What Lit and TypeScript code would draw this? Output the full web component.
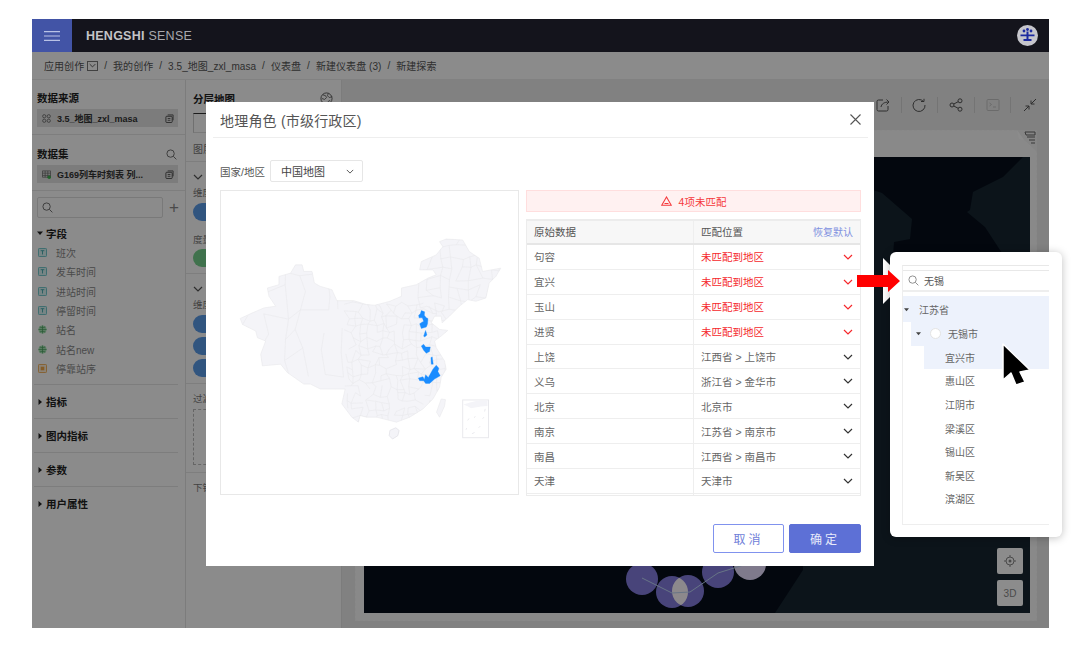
import { LitElement, html, css, svg } from 'lit';
import { customElement } from 'lit/decorators.js';

const OUTLINE =
  '58,232 95,215 130,200 165,195 145,165 140,140 175,130 175,105 210,95 225,70 245,70 250,90 275,90 282,125 300,135 335,145 350,178 400,178 440,190 465,192 510,180 545,165 545,140 590,130 625,110 650,100 640,85 600,85 605,60 650,40 670,15 660,0 680,-8 730,-5 750,30 780,50 790,90 845,80 830,105 810,125 800,170 770,180 745,175 720,195 690,225 668,245 665,225 645,225 635,245 660,265 685,268 665,285 645,300 650,320 675,360 680,385 665,410 660,440 640,475 610,505 570,530 530,545 490,535 470,530 440,530 420,525 415,545 395,530 365,490 375,445 345,445 300,445 270,430 250,430 200,395 180,370 125,375 120,340 135,300 110,290 105,270 65,250';

const BLUE = [
  '597,222 602,218 605,208 615,212 614,222 620,230 625,232 624,248 620,258 605,262 600,248 612,240 608,230 598,230',
  '612,285 618,268 622,282 615,288',
  '605,315 612,310 618,318 632,318 630,332 620,337 612,328',
  '634,350 638,348 641,370 635,370',
  '596,412 610,408 614,416 618,402 626,410 632,400 640,385 650,373 658,382 655,392 662,405 645,415 630,428 618,428 612,420 600,420',
];

// jittered grid, clipped to the outline, stands in for the prefecture borders
function mesh(x0: number, y0: number, x1: number, y1: number, cell: number, seed: number) {
  let s = seed;
  const rnd = () => {
    s = (s * 16807) % 2147483647;
    return s / 2147483647;
  };
  const pts: number[][][] = [];
  for (let j = 0; y0 + j * cell <= y1; j++) {
    const row: number[][] = [];
    for (let i = 0; x0 + i * cell <= x1; i++) {
      row.push([
        x0 + i * cell + (rnd() - 0.5) * cell * 0.8,
        y0 + j * cell + (rnd() - 0.5) * cell * 0.8,
      ]);
    }
    pts.push(row);
  }
  let d = '';
  pts.forEach((row, j) =>
    row.forEach((p, i) => {
      const r = row[i + 1];
      const b = pts[j + 1]?.[i];
      if (r && rnd() > 0.25) d += `M${p[0].toFixed(0)} ${p[1].toFixed(0)}L${r[0].toFixed(0)} ${r[1].toFixed(0)}`;
      if (b && rnd() > 0.25) d += `M${p[0].toFixed(0)} ${p[1].toFixed(0)}L${b[0].toFixed(0)} ${b[1].toFixed(0)}`;
    })
  );
  return d;
}

const MESH = [
  mesh(60, 90, 390, 450, 62, 7),
  mesh(380, 190, 690, 550, 21, 11),
  mesh(600, -10, 850, 200, 30, 23),
].join('');

const chevron = () => html`<svg class="chev" viewBox="0 0 10 6"><path d="M1 1l4 4 4-4" fill="none" stroke="currentColor" stroke-width="1.200"/></svg>`;
const caret = (open = false) => html`<svg class="caret" viewBox="0 0 6 6"><path d="${open ? 'M0 1.5h6L3 5z' : 'M1.5 0v6L5 3z'}" fill="currentColor"/></svg>`;
const copyIcon = html`<svg class="copy" viewBox="0 0 10 10"><rect x="1" y="2.5" width="7" height="7" rx="1" fill="none" stroke="currentColor"/><path d="M3 1h6v6M3 5h3M3 7h3" fill="none" stroke="currentColor" stroke-width=".9"/></svg>`;
const searchIcon = html`<svg class="search" viewBox="0 0 12 12"><circle cx="5" cy="5" r="4" fill="none" stroke="currentColor"/><path d="M8 8l3.3 3.3" stroke="currentColor"/></svg>`;

const FIELDS = [
  ['T', '班次'],
  ['T', '发车时间'],
  ['T', '进站时间'],
  ['T', '停留时间'],
  ['G', '站名'],
  ['G', '站名new'],
  ['N', '停靠站序'],
];

const ROWS = [
  ['句容', ''],
  ['宜兴', ''],
  ['玉山', ''],
  ['进贤', ''],
  ['上饶', '江西省 > 上饶市'],
  ['义乌', '浙江省 > 金华市'],
  ['北京', '北京市'],
  ['南京', '江苏省 > 南京市'],
  ['南昌', '江西省 > 南昌市'],
  ['天津', '天津市'],
];

@customElement('app-root')
export class AppRoot extends LitElement {
  static styles = css`
    :host {
      display: block;
      width: 1080px;
      height: 647px;
      position: relative;
      overflow: hidden;
      background: #fff;
      font-family: 'Liberation Sans', 'Noto Sans CJK SC', sans-serif;
      font-size: 10px;
      color: #333;
    }
    svg { display: block; flex: none; }

    .window {
      position: absolute;
      left: 32px;
      top: 19px;
      width: 1017px;
      height: 609px;
      display: flex;
      flex-direction: column;
      background: #fdfdfd;
    }
    .topbar {
      position: relative;
      z-index: 3;
      height: 33px;
      flex: none;
      display: flex;
      align-items: center;
      background: #14141c;
    }
    .burger {
      width: 40px;
      height: 33px;
      background: #4254a6;
      display: flex;
      align-items: center;
      justify-content: center;
    }
    .burger svg { width: 16px; height: 10px; }
    .logo { margin-left: 14px; font-size: 12.5px; color: #a8a8ae; letter-spacing: .25px; }
    .logo b { color: #c4c4c8; }
    .avatar { margin-left: auto; margin-right: 11px; width: 21px; height: 21px; }

    .crumbs {
      height: 28px;
      flex: none;
      box-sizing: border-box;
      border-bottom: 1px solid #ececec;
      padding-left: 12px;
      display: flex;
      align-items: center;
      gap: 6px;
      font-size: 10px;
      letter-spacing: .05px;
      color: #555;
    }
    .crumbs .drop {
      width: 11px;
      height: 10px;
      margin-left: -3px;
      box-sizing: border-box;
      border: 1px solid #777;
      display: flex;
      align-items: center;
      justify-content: center;
      color: #444;
    }
    .crumbs .drop svg { width: 7px; height: 5px; }

    .main { flex: 1; display: flex; min-height: 0; }

    .left {
      width: 154px;
      flex: none;
      box-sizing: border-box;
      border-right: 1px solid #e2e2e2;
      background: #fefefe;
    }
    .src { height: 55px; box-sizing: border-box; padding: 11px 7px 0 5px; border-bottom: 1px solid #e6e6e6; margin-bottom: 1px; }
    .src-head { height: 14px; line-height: 14px; display: flex; justify-content: space-between; align-items: center; font-weight: 700; font-size: 10.5px; color: #222; }
    .src-head .search { width: 11px; height: 11px; color: #666; margin-right: 1px; }
    .chip {
      margin-top: 4px;
      height: 18px;
      background: #e2e2e2;
      display: flex;
      align-items: center;
      padding: 0 4px 0 5px;
      gap: 6px;
      font-size: 9px;
      font-weight: 700;
      color: #333;
      white-space: nowrap;
    }
    .chip .copy { width: 9px; height: 9px; margin-left: auto; color: #444; }
    .chip .ic { width: 9px; height: 9px; color: #666; }
    .finder { margin: 6px 0 0 5px; display: flex; align-items: center; }
    .finder .box { width: 126px; height: 21px; box-sizing: border-box; border: 1px solid #dcdcdc; border-radius: 2px; display: flex; align-items: center; padding-left: 4px; color: #666; }
    .finder .box svg { width: 11px; height: 11px; }
    .finder .plus { margin-left: 6px; font-size: 17px; line-height: 16px; color: #888; }
    .group-head { height: 20px; margin: 5px 0 0 5px; display: flex; align-items: center; gap: 3px; font-size: 10.5px; font-weight: 700; color: #222; }
    .caret { width: 6px; height: 6px; color: #222; }
    .field { height: 19.3px; display: flex; align-items: center; padding-left: 6px; gap: 9px; color: #888; font-size: 10px; }
    .field svg { width: 9px; height: 9px; }
    .groups { margin: 6px 7px 0 2px; }
    .groups > div { height: 34px; box-sizing: border-box; border-top: 1px solid #e4e4e4; display: flex; align-items: center; gap: 3px; padding-left: 3px; font-size: 10.5px; font-weight: 700; color: #222; }

    .mid { width: 156px; flex: none; box-sizing: border-box; border-right: 1px solid #e2e2e2; }
    .mid-top { height: 82px; box-sizing: border-box; border-bottom: 1px solid #e6e6e6; padding: 11px 8px 0 7px; color: #777; }
    .mid-head { height: 14px; display: flex; justify-content: space-between; align-items: center; font-weight: 700; font-size: 10.5px; color: #222; }
    .mid-head svg { width: 13px; height: 13px; color: #555; }
    .tab { height: 20px; margin-top: 8px; width: 60px; box-sizing: border-box; border-top: 1px solid #333; border-left: 1px solid #ccc; border-bottom: 1px solid #ddd; }
    .mid-label { margin-top: 8px; }
    .sec { box-sizing: border-box; border-bottom: 1px solid #e6e6e6; padding: 8px 0 0 7px; color: #777; }
    .sec-a { height: 112px; }
    .sec-b { height: 110px; }
    .sec-c { height: 89px; padding-top: 6px; }
    .sec-d { border: 0; padding-top: 6px; }
    .sec .chev { width: 10px; height: 14px; color: #555; }
    .label { height: 14px; line-height: 14px; margin-top: 2px; font-size: 9.5px; }
    .pill { width: 60px; height: 18px; margin-top: 3px; border-radius: 9px; background: #5a9be8; }
    .pill.green { background: #76cf8c; margin-top: 2px; }
    .pill.tight { margin-top: 4px; }
    .gap-12 { margin-top: 12px; }
    .dashed { width: 80px; height: 56px; margin-top: 3px; box-sizing: border-box; border: 1px dashed #bbb; }

    .canvas { flex: 1; min-width: 0; background: #ebebeb; }
    .tools { height: 50px; display: flex; justify-content: flex-end; align-items: center; padding-right: 1px; color: #555; }
    .tools .t { width: 36.6px; height: 16px; display: flex; justify-content: center; align-items: center; border-right: 1px solid #d4d4d4; box-sizing: border-box; }
    .tools .t:last-child { border-right: 0; }
    .tools svg { width: 14px; height: 14px; }
    .card { margin: 0 12px 0 13px; height: 491px; box-sizing: border-box; padding: 26px 6px 7px 8px; border: 1px dashed #f6f6f6; position: relative; background: #fafafa; }
    .ear { position: absolute; right: -1px; top: -1px; width: 22px; height: 22px; color: #666; }
    .geo { position: relative; height: 100%; background: #070e1b; overflow: hidden; }
    .geo > svg { width: 100%; height: 100%; }
    .mapbtn { position: absolute; right: 7px; width: 26px; height: 26px; border-radius: 2px; background: #fff; color: #888; display: flex; align-items: center; justify-content: center; font-size: 10px; }
    .mapbtn svg { width: 12px; height: 12px; }
    .b1 { bottom: 39px; }
    .b2 { bottom: 7px; }

    .shade { position: absolute; left: 0; right: 0; top: 33px; bottom: 0; z-index: 1; background: rgba(0, 0, 0, .45); }

    .modal {
      position: absolute;
      z-index: 2;
      left: 174px;
      top: 83px;
      width: 668px;
      height: 464px;
      box-sizing: border-box;
      background: #fff;
      padding: 0 13px 0 14px;
      display: flex;
      flex-direction: column;
    }
    .m-head { height: 35px; flex: none; margin: 0 -7px; padding: 0 7px; border-bottom: 1px solid #eee; display: flex; align-items: center; justify-content: space-between; font-size: 14px; letter-spacing: .2px; color: #555; }
    .m-head svg { width: 11px; height: 11px; color: #555; }
    .country { margin-top: 22px; height: 22px; flex: none; display: flex; align-items: center; gap: 5px; font-size: 10.5px; color: #555; }
    .select { width: 93px; height: 22px; box-sizing: border-box; border: 1px solid #e6e6e6; border-radius: 2px; padding: 0 8px 0 10px; display: flex; align-items: center; justify-content: space-between; font-size: 11px; color: #444; }
    .select svg { width: 8px; height: 5px; color: #555; }
    .split { margin-top: 8px; display: grid; grid-template-columns: 299px 335px; gap: 7px; }
    .map { height: 305px; box-sizing: border-box; border: 1px solid #e8e8e8; }
    .map svg { width: 100%; height: 100%; }
    .alert { height: 22px; box-sizing: border-box; background: #fff1f1; border: 1px solid #ffdede; color: #f5393c; display: flex; align-items: center; justify-content: center; gap: 7px; font-size: 10.5px; }
    .alert svg { width: 11px; height: 10px; }
    .table { margin-top: 7px; height: 277px; box-sizing: border-box; overflow: hidden; border: 1px solid #ececec; border-top-width: 2px; font-size: 10.5px; color: #666; }
    .tr { display: grid; grid-template-columns: 167px 1fr; height: 24.9px; box-sizing: border-box; border-bottom: 1.5px solid #eee; }
    .tr > div { display: flex; align-items: center; padding: 0 7px; }
    .tr > div:first-child { border-right: 1.5px solid #eee; }
    .tr.th { height: 24px; background: #f7f7f7; color: #555; border-bottom: 2px solid #e6e6e6; }
    .tr.th > div { padding-bottom: 1px; }
    .tr .chev { width: 10px; height: 6px; margin-left: auto; color: #333; }
    .tr .miss { color: #f5282c; }
    .tr .miss .chev { color: #f5282c; }
    .tr .reset { margin-left: auto; font-size: 10px; color: #8090e0; }
    .foot { margin-top: 28px; display: flex; justify-content: flex-end; gap: 5px; }
    .btn { width: 71px; height: 29px; box-sizing: border-box; border: 1px solid #8092ee; border-radius: 2px; display: flex; align-items: center; justify-content: center; font-size: 12px; letter-spacing: 3px; color: #6f80d8; }
    .btn.ok { width: 72px; background: #5d70d6; color: #e8ebfa; border-color: #5d70d6; }

    .pointer { position: absolute; z-index: 6; left: 0; top: 0; pointer-events: none; }
    .pop {
      position: absolute;
      z-index: 4;
      left: 890px;
      top: 252px;
      width: 172px;
      height: 285px;
      box-sizing: border-box;
      padding: 13px 13px 12px 12px;
      background: #fff;
      border-radius: 6px;
      box-shadow: 0 1px 8px rgba(0, 0, 0, .25);
    }
    .wedge { position: absolute; z-index: 4; left: 883px; top: 258px; }
    .tree { height: 100%; box-sizing: border-box; border: 1px solid #eee; border-right: 0; border-top: 1px solid #e8e8e8; }
    .tree-search { margin-top: 4px; height: 22px; box-sizing: border-box; border-top: 1px solid #e8e8e8; border-bottom: 2px solid #eee; display: flex; align-items: center; gap: 5px; padding-left: 5px; font-size: 10px; color: #555; }
    .tree-search svg { width: 11px; height: 11px; color: #888; }
    .nodes { margin-top: 4px; font-size: 10px; color: #666; }
    .node { height: 23.6px; display: flex; align-items: center; }
    .node .caret { width: 5px; height: 5px; color: #444; }
    .n1 { background: #edf2fc; padding-left: 1px; gap: 10px; height: 26px; }
    .n2 { background: #edf2fc; margin-left: 8px; padding-left: 5px; gap: 14px; }
    .n2 i { width: 11px; height: 11px; margin-left: -5px; margin-right: -7px; box-sizing: border-box; border-radius: 50%; background: #fff; border: 1px solid #e4e4e4; }
    .n3 { margin-left: 21px; padding-left: 21px; }
    .n3.on { background: #edf2fc; }
  `;

  render() {
    return html`
      <div class="window">
        <div class="topbar">
          <div class="burger"><svg viewBox="0 0 16 10"><path d="M0 .7h16M0 5h16M0 9.3h16" stroke="#b9c2e6" stroke-width="1.2"/></svg></div>
          <div class="logo"><b>HENGSHI</b> SENSE</div>
          <svg class="avatar" viewBox="0 0 21 21">
            <circle cx="10.5" cy="10.5" r="10.5" fill="#c6c6cc"/>
            <path d="M3.500 9.500h14v1.700h-14zM9.500 6.500h2V14h-2zM6.500 14h8v2h-8z" fill="#1c2aa0"/>
            <circle cx="7" cy="6" r="1.400" fill="#1c2aa0"/><circle cx="14" cy="6" r="1.400" fill="#1c2aa0"/><circle cx="10.500" cy="4.500" r="1.400" fill="#1c2aa0"/>
          </svg>
        </div>
        <div class="crumbs">
          <span>应用创作</span><span class="drop">${chevron()}</span>
          <span>/</span><span>我的创作</span><span>/</span><span>3.5_地图_zxl_masa</span><span>/</span><span>仪表盘</span><span>/</span><span>新建仪表盘 (3)</span><span>/</span><span>新建探索</span>
        </div>
        <div class="main">
          ${this.renderLeft()} ${this.renderMid()} ${this.renderCanvas()}
        </div>
        <div class="shade"></div>
        ${this.renderModal()}
      </div>
      ${this.renderPop()}
      <svg class="pointer" width="1080" height="647" viewBox="0 0 1080 647">
        <path d="M857 275h31v-5l12 11-12 11v-5h-31z" fill="#f00"/>
        <path d="M1003 344l27 26-10 2 5 10-9 3-5-12-8 7z" fill="#000" stroke="#fff" stroke-width="1.5" stroke-linejoin="round"/>
      </svg>
    `;
  }

  renderLeft() {
    return html`
      <div class="left">
        <div class="src">
          <div class="src-head">数据来源</div>
          <div class="chip">
            <svg class="ic" viewBox="0 0 10 10"><g fill="none" stroke="currentColor" stroke-width=".9"><circle cx="2.5" cy="2.5" r="1.8"/><circle cx="7.5" cy="2.5" r="1.8"/><circle cx="2.5" cy="7.5" r="1.8"/><circle cx="7.5" cy="7.5" r="1.8"/></g></svg>
            3.5_地图_zxl_masa ${copyIcon}
          </div>
        </div>
        <div class="src">
          <div class="src-head">数据集 ${searchIcon}</div>
          <div class="chip">
            <svg class="ic" viewBox="0 0 10 10"><path d="M.5 1h9v7h-9zM.5 3.5h9M.5 6h9M3.5 1v7M6.5 1v7" fill="none" stroke="currentColor" stroke-width=".8"/><circle cx="8" cy="8" r="2" fill="#3fb24f"/></svg>
            G169列车时刻表 列... ${copyIcon}
          </div>
        </div>
        <div class="finder">
          <div class="box">${searchIcon}</div>
          <span class="plus">+</span>
        </div>
        <div class="group-head">${caret(true)} 字段</div>
        ${FIELDS.map(([k, name]) => html`<div class="field">${this.fieldIcon(k)}<span>${name}</span></div>`)}
        <div class="groups">
          ${['指标', '图内指标', '参数', '用户属性'].map((g) => html`<div>${caret()} ${g}</div>`)}
        </div>
      </div>
    `;
  }

  fieldIcon(kind: string) {
    if (kind === 'T') {
      return html`<svg viewBox="0 0 10 10"><rect x=".5" y=".5" width="9" height="9" rx="1" fill="#d8f2f2" stroke="#5fc0c4"/><path d="M3 3h4M5 3v4.2" stroke="#3fa8ac"/></svg>`;
    }
    if (kind === 'G') {
      return html`<svg viewBox="0 0 10 10"><circle cx="5" cy="5" r="4.5" fill="#a4e2b2"/><path d="M.5 5h9M5 .5v9M2 2.2c2 1 4 1 6 0M2 7.8c2-1 4-1 6 0" fill="none" stroke="#3f9a58" stroke-width=".7"/></svg>`;
    }
    return html`<svg viewBox="0 0 10 10"><rect x=".5" y=".5" width="9" height="9" rx="1" fill="#fdeeda" stroke="#f0a84a"/><rect x="3" y="3" width="4" height="4" fill="#f0a84a"/></svg>`;
  }

  renderMid() {
    return html`
      <div class="mid">
        <div class="mid-top">
          <div class="mid-head">分层地图
            <svg viewBox="0 0 14 14"><circle cx="7" cy="7" r="6" fill="none" stroke="currentColor"/><path d="M3 3l3 1 1 2-2 2-3-1M9 1.5L8 4l2 2 3-1M8 13l1-3 2-1" fill="none" stroke="currentColor" stroke-width=".9"/></svg>
          </div>
          <div class="tab"></div>
          <div class="mid-label">图层</div>
        </div>
        <div class="sec sec-a">
          ${chevron()}
          <div class="label">维度</div>
          <div class="pill"></div>
          <div class="label gap-12">度量</div>
          <div class="pill green"></div>
        </div>
        <div class="sec sec-b">
          ${chevron()}
          <div class="label">维度</div>
          <div class="pill"></div>
          <div class="pill tight"></div>
          <div class="pill tight"></div>
        </div>
        <div class="sec sec-c">
          <div class="label">过滤</div>
          <div class="dashed"></div>
        </div>
        <div class="sec sec-d"><div class="label">下钻</div></div>
      </div>
    `;
  }

  renderCanvas() {
    return html`
      <div class="canvas">
        <div class="tools">
          <div class="t"><svg viewBox="0 0 14 14"><path d="M7 2H2.500A1.500 1.500 0 0 0 1 3.500v8A1.500 1.500 0 0 0 2.500 13h8a1.500 1.500 0 0 0 1.500-1.500V8M5 9c.5-3 3-5 8-5M10.500 1.500L13 4l-2.500 2.500" fill="none" stroke="currentColor"/></svg></div>
          <div class="t"><svg viewBox="0 0 14 14"><path d="M11.500 3.500A6 6 0 1 0 13 7M9 3.500h3V.8" fill="none" stroke="currentColor"/></svg></div>
          <div class="t"><svg viewBox="0 0 14 14"><g fill="none" stroke="currentColor"><circle cx="3" cy="7" r="2"/><circle cx="11" cy="2.800" r="2"/><circle cx="11" cy="11.200" r="2"/><path d="M4.800 6l4.400-2.300M4.800 8l4.400 2.300"/></g></svg></div>
          <div class="t"><svg viewBox="0 0 14 14"><rect x="1" y="1.500" width="12" height="11" rx="1" fill="none" stroke="#c4c4c4"/><path d="M3.500 5l2 1.500-2 1.500M7 9h3" fill="none" stroke="#c4c4c4"/></svg></div>
          <div class="t"><svg viewBox="0 0 14 14"><path d="M8 6l5-5M8 2.500V6h3.500M6 8l-5 5M6 11.500V8H2.500" fill="none" stroke="currentColor"/></svg></div>
        </div>
        <div class="card">
          <svg class="ear" viewBox="0 0 22 22"><path d="M2 0l7 10 13 12V0z" fill="#f2f2f2"/><path d="M2 0l2 9 5 1 6 6 7 6-13-12z" fill="#fff"/><path d="M10 2h10v3H11zM12 7h8M14 10h6M16 13h4" fill="none" stroke="currentColor"/></svg>
          <div class="geo">
            <svg viewBox="0 0 666 456" preserveAspectRatio="none">
              <defs><clipPath id="c4"><circle cx="324" cy="434" r="16"/></clipPath></defs>
              <path d="M666 0h-7l-20 20-30 15-3 18-3 2 18 15 15 23 30 40zM500 30l18 6 30 26-2 20-16 3-4 55v80l140 160v76H411l15-23 13-20V300l61-100z" fill="#162631"/>
              <g fill="#837cde">
                <circle cx="278" cy="422" r="16"/>
                <circle cx="308" cy="435" r="16"/>
                <circle cx="324" cy="434" r="16"/>
                <circle cx="354" cy="415" r="16"/>
              </g>
              <circle cx="308" cy="435" r="16" fill="#fff9ff" clip-path="url(#c4)"/>
              <circle cx="386" cy="407" r="16" fill="#e7deff"/>
              <path d="M278 421l30 15 18-1 28-19 32-10" fill="none" stroke="#bcd4f4" stroke-width="1"/>
            </svg>
            <div class="mapbtn b1"><svg viewBox="0 0 12 12"><circle cx="6" cy="6" r="4" fill="none" stroke="currentColor"/><circle cx="6" cy="6" r="1.500" fill="currentColor"/><path d="M6 0v2M6 10v2M0 6h2M10 6h2" stroke="currentColor"/></svg></div>
            <div class="mapbtn b2">3D</div>
          </div>
        </div>
      </div>
    `;
  }

  renderModal() {
    return html`
      <div class="modal">
        <div class="m-head">
          <span>地理角色 (市级行政区)</span>
          <svg viewBox="0 0 11 11"><path d="M.5.5l10 10M10.500.5l-10 10" stroke="currentColor" stroke-width="1.100"/></svg>
        </div>
        <div class="country">
          <span>国家/地区</span>
          <div class="select">中国地图 ${chevron()}</div>
        </div>
        <div class="split">
          <div class="map">${this.renderChina()}</div>
          <div>
            <div class="alert">
              <svg viewBox="0 0 11 10"><path d="M5.500 1L10.300 9.300H.7z" fill="none" stroke="currentColor" stroke-width="1.100"/><path d="M3.500 7.500h4" stroke="currentColor"/></svg>
              <span>4项未匹配</span>
            </div>
            <div class="table">
              <div class="tr th">
                <div>原始数据</div>
                <div>匹配位置<span class="reset">恢复默认</span></div>
              </div>
              ${ROWS.map(
                ([name, place]) => html`
                  <div class="tr">
                    <div>${name}</div>
                    <div class="${place ? '' : 'miss'}">${place || '未匹配到地区'} ${chevron()}</div>
                  </div>
                `
              )}
              <div class="tr"><div></div><div></div></div>
            </div>
          </div>
        </div>
        <div class="foot">
          <div class="btn">取消</div>
          <div class="btn ok">确定</div>
        </div>
      </div>
    `;
  }

  renderChina() {
    return html`
      <svg viewBox="0 -150 897 909">
        ${svg`
          <defs><clipPath id="cn"><polygon points="${OUTLINE}"/></clipPath></defs>
          <polygon points="${OUTLINE}" fill="#f4f4f8" stroke="#e9e9ed" stroke-width="2"/>
          <path d="${MESH}" clip-path="url(#cn)" fill="none" stroke="#e9e9ed" stroke-width="2"/>
          ${BLUE.map((p) => svg`<polygon points="${p}" fill="#1a8cff" stroke="#1a8cff" stroke-width="1"/>`)}
          <path d="M665 475l13 2-3 20-15 33-9-15z" fill="#f4f4f8" stroke="#e9e9ed" stroke-width="2"/>
          <path d="M510 570l18-8 10 8-4 16-16 10-10-10z" fill="#f4f4f8" stroke="#dedee4" stroke-width="2"/>
          <rect x="730" y="478" width="78" height="114" fill="#fff" stroke="#e9e9ed" stroke-width="3"/>
          <path d="M732 492l20-6 25-6 28 0v16l-20 2-30 5-10-6z" fill="#f4f4f8"/>
          <path d="M745 540l4-6M765 532l3-5M790 535l4-5M798 505l-2 8M740 568l2-5M758 580l8-4M778 562l5-5" stroke="#e0e0e6" stroke-width="2"/>
        `}
      </svg>
    `;
  }

  renderPop() {
    const rest = ['惠山区', '江阴市', '梁溪区', '锡山区', '新吴区', '滨湖区'];
    return html`
      <svg class="wedge" width="24" height="46" viewBox="0 0 24 46"><path d="M0 0l23 23L0 46z" fill="#fff"/></svg>
      <div class="pop">
        <div class="tree">
          <div class="tree-search">${searchIcon}<span>无锡</span></div>
          <div class="nodes">
            <div class="node n1">${caret(true)}<span>江苏省</span></div>
            <div class="node n2">${caret(true)}<i></i><span>无锡市</span></div>
            <div class="node n3 on">宜兴市</div>
            ${rest.map((n) => html`<div class="node n3">${n}</div>`)}
          </div>
        </div>
      </div>
    `;
  }
}
